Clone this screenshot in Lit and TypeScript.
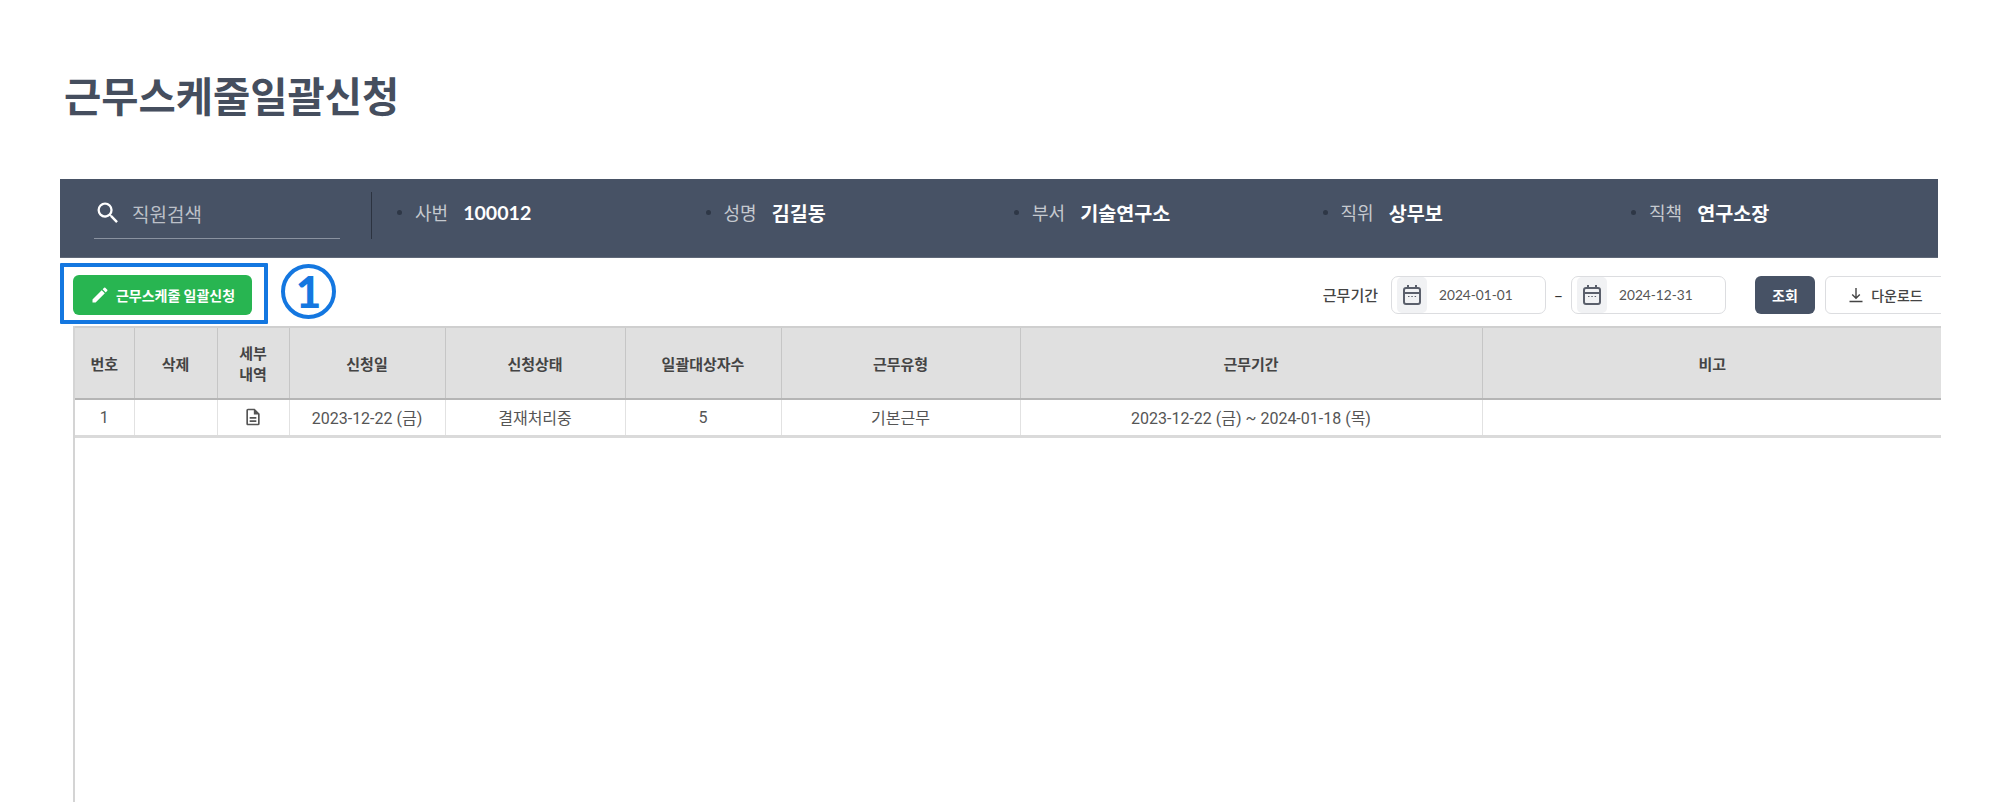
import { LitElement, html, css } from "lit";
import { customElement } from "lit/decorators.js";

const calendar = html`<span class="cal"><svg width="20" height="22" viewBox="0 0 20 22" fill="none" stroke="#5a5f6b" stroke-width="2">
  <rect x="2" y="4" width="16" height="16" rx="2"/><path d="M2 9h16" stroke-width="2"/><path d="M6 1v4M14 1v4"/><path d="M6 12.5h1.5M9.3 12.5h1.5M12.6 12.5h1.5" stroke-width="1.2"/>
</svg></span>`;

const infos = [
  ["사번", "100012"],
  ["성명", "김길동"],
  ["부서", "기술연구소"],
  ["직위", "상무보"],
  ["직책", "연구소장"],
];

const cols = [59, 83, 72, 156, 180, 156, 239, 462, 460];

@customElement("app-root")
export class AppRoot extends LitElement {
  static styles = css`
    :host { display: block; width: 2000px; height: 802px; overflow: hidden; background: #fff; font-family: "Lato", "Noto Sans CJK KR", sans-serif; }
    .page { position: relative; height: 802px; padding-left: 60px; box-sizing: border-box; overflow: hidden; }
    h1 { margin: 0; padding: 65px 0 0 4px; height: 179px; box-sizing: border-box; font: 700 40.5px/60px "Noto Sans CJK KR", sans-serif; color: #454e5e; }
    .bar { width: 1878px; height: 79px; background: #475265; display: flex; align-items: flex-start; box-sizing: border-box; border-bottom: 1px solid #5f6878; }
    .search { width: 246px; margin-left: 34px; height: 60px; border-bottom: 1px solid #8a92a0; display: flex; align-items: center; gap: 10px; color: #bcc0c8; font: 400 19px "Noto Sans CJK KR", sans-serif; box-sizing: border-box; padding: 9px 0 0 0; }
    .divider { width: 1px; height: 47px; background: #2c3340; margin: 13px 22px 0 31px; }
    .items { display: grid; grid-template-columns: repeat(5, 308.5px); padding-top: 15px; }
    .item { display: flex; align-items: center; height: 36px; }
    .dot { width: 5px; height: 5px; border-radius: 50%; background: #2e3746; margin: 0 13px 0 3px; }
    .lbl { font: 400 18px "Noto Sans CJK KR", sans-serif; color: #c5c9cf; margin-right: 15px; }
    .val { font: 700 19.6px "Lato", "Noto Sans CJK KR", sans-serif; color: #fff; }
    .tool { width: 1881px; height: 68px; display: flex; align-items: center; overflow: hidden; padding: 5px 0 0 13px; box-sizing: border-box; }
    .add { width: 179px; height: 40px; border-radius: 6px; background: #28b551; color: #fff; display: flex; align-items: center; justify-content: center; gap: 6px; font: 700 14px "Noto Sans CJK KR", sans-serif; box-sizing: border-box; }
    .spacer { flex: 1; }
    .period { font: 500 15px "Noto Sans CJK KR", sans-serif; color: #444; margin-right: 13px; }
    .date { width: 155px; height: 38px; border: 1px solid #dcdde0; border-radius: 7px; display: flex; align-items: center; box-sizing: border-box; font: 400 13.7px "Lato", sans-serif; color: #555; }
    .cal { width: 30px; height: 36px; margin-left: 5px; margin-right: 12px; background: #f1f2f4; border-radius: 5px; display: flex; align-items: center; justify-content: center; }
    .dash { width: 25px; text-align: center; font: 500 16px "Lato", sans-serif; color: #333; }
    .btn { height: 38px; border-radius: 6px; display: flex; align-items: center; justify-content: center; box-sizing: border-box; font: 700 14px "Noto Sans CJK KR", sans-serif; }
    .go { width: 60px; background: #475265; color: #fff; margin-left: 29px; }
    .down { width: 122px; flex: none; margin-left: 10px; border: 1px solid #dcdde0; color: #444; font-weight: 500; font-size: 14px; gap: 6px; margin-right: -6px; padding-right: 2px; }
    .wrap { margin-left: 13px; width: 1868px; height: 476px; border-left: 2px solid #d4d4d4; box-sizing: border-box; overflow: hidden; }
    table { border-collapse: collapse; table-layout: fixed; width: 1867px; font-family: "Noto Sans CJK KR", sans-serif; }
    th { height: 72px; padding: 0; background: #e0e0e0; border-top: 2px solid #cfcfcf; border-right: 1px solid #c6c6c6; border-bottom: 2px solid #b5b5b5; font: 700 15px/21px "Noto Sans CJK KR", sans-serif; color: #444; box-sizing: border-box; }
    td { height: 37px; padding: 0; text-align: center; border-right: 1px solid #e2e2e2; border-bottom: 3px solid #dadada; font: 400 16px "Roboto", "Noto Sans CJK KR", sans-serif; color: #555; box-sizing: border-box; }
    td svg { display: block; margin: 0 auto; }
    th:last-child, td:last-child { border-right: 0; }
    .mark { position: absolute; left: 60px; top: 263px; width: 208px; height: 61px; border: 4px solid #1477e0; border-radius: 1px; box-sizing: border-box; }
    .num { position: absolute; left: 281px; top: 264px; width: 55px; height: 55px; border: 4px solid #1477e0; border-radius: 50%; box-sizing: border-box; color: #1477e0; font: 900 44px/47px "Lato", sans-serif; text-align: center; background: #fff; }
  `;

  render() {
    return html`<div class="page">
      <h1>근무스케줄일괄신청</h1>
      <div class="bar">
        <div class="search">
          <svg width="28" height="28" viewBox="0 0 24 24" fill="#fff"><path d="M15.5 14h-.79l-.28-.27A6.47 6.47 0 0 0 16 9.5 6.5 6.5 0 1 0 9.5 16c1.61 0 3.09-.59 4.23-1.57l.27.28v.79l5 4.99L20.49 19l-4.99-5zm-6 0C7.01 14 5 11.99 5 9.5S7.01 5 9.5 5 14 7.01 14 9.5 11.99 14 9.5 14z"/></svg>
          <span>직원검색</span>
        </div>
        <div class="divider"></div>
        <div class="items">
          ${infos.map(([l, v]) => html`<div class="item"><span class="dot"></span><span class="lbl">${l}</span><span class="val">${v}</span></div>`)}
        </div>
      </div>
      <div class="tool">
        <div class="add">
          <svg width="20" height="20" viewBox="0 0 24 24" fill="#fff"><path d="M3 17.25V21h3.75L17.81 9.94l-3.75-3.75L3 17.25zM20.71 7.04a1 1 0 0 0 0-1.41l-2.34-2.34a1 1 0 0 0-1.41 0l-1.83 1.83 3.75 3.75 1.83-1.83z"/></svg>
          <span>근무스케줄 일괄신청</span>
        </div>
        <div class="spacer"></div>
        <span class="period">근무기간</span>
        <div class="date">${calendar}<span>2024-01-01</span></div>
        <span class="dash">–</span>
        <div class="date">${calendar}<span>2024-12-31</span></div>
        <div class="btn go">조회</div>
        <div class="btn down">
          <svg width="18" height="18" viewBox="0 0 18 18" fill="none" stroke="#444" stroke-width="1.4"><path d="M9 2v10M5.2 8.4 9 12.2l3.8-3.8M2.5 15.5h13"/></svg>
          <span>다운로드</span>
        </div>
      </div>
      <div class="wrap">
        <table>
          <colgroup>${cols.map((w) => html`<col style="width:${w}px" />`)}</colgroup>
          <thead><tr>
            <th>번호</th><th>삭제</th><th>세부<br />내역</th><th>신청일</th><th>신청상태</th><th>일괄대상자수</th><th>근무유형</th><th>근무기간</th><th>비고</th>
          </tr></thead>
          <tbody><tr>
            <td>1</td><td></td>
            <td><svg width="20" height="20" viewBox="0 0 24 24" fill="#555"><path d="M8 16h8v2H8zm0-4h8v2H8zm6-10H6a2 2 0 0 0-2 2v16c0 1.1.89 2 1.99 2H18a2 2 0 0 0 2-2V8l-6-6zm4 18H6V4h7v5h5v11z"/></svg></td>
            <td>2023-12-22 (금)</td><td>결재처리중</td><td>5</td><td>기본근무</td><td>2023-12-22 (금) ~ 2024-01-18 (목)</td><td></td>
          </tr></tbody>
        </table>
      </div>
      <div class="mark"></div>
      <div class="num">1</div>
    </div>`;
  }
}
